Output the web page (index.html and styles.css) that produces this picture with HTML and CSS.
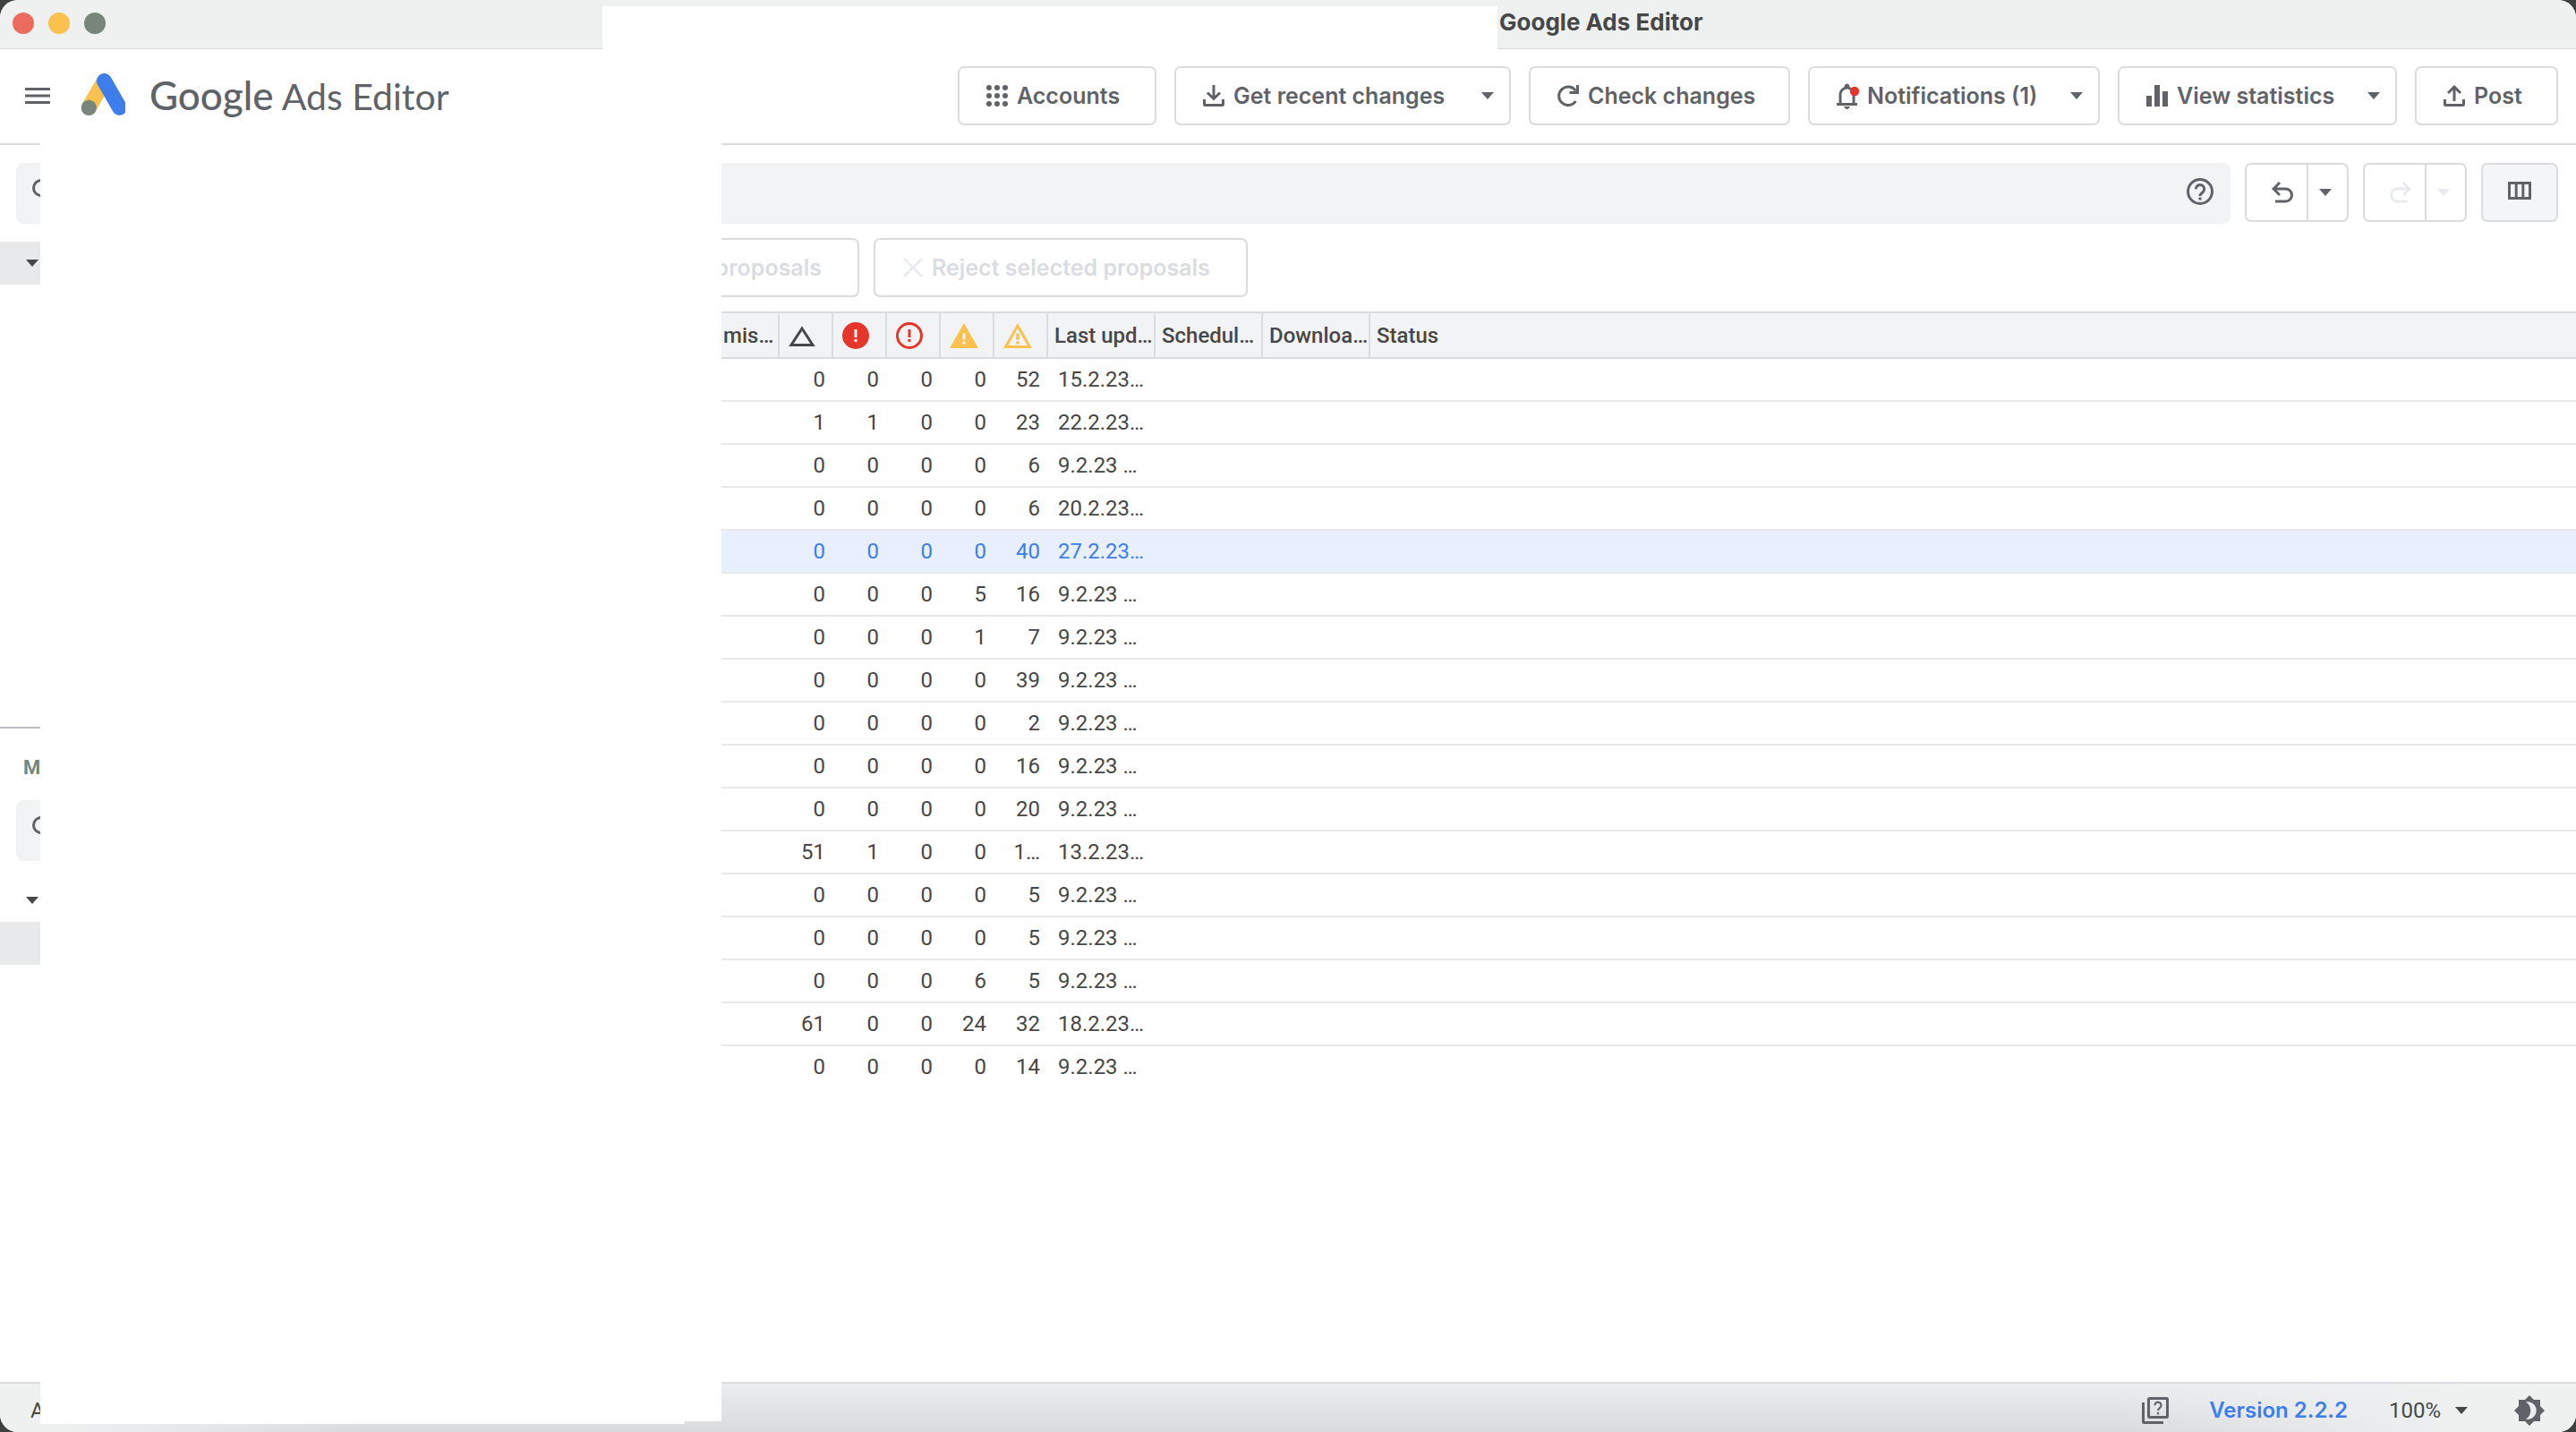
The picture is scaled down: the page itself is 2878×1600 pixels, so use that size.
FILE: index.html
```
<!DOCTYPE html>
<html lang="en">
<head>
<meta charset="utf-8">
<title>Google Ads Editor</title>
<link rel="stylesheet" href="styles.css">
</head>
<body>
<svg class="defs" aria-hidden="true">
  <symbol id="caret" viewBox="0 0 14 8"><path d="M0 0h14L7 8z" fill="currentColor"/></symbol>
  <symbol id="search" viewBox="0 0 28 28"><circle cx="10" cy="10" r="8.500" fill="none" stroke="currentColor" stroke-width="3"/><path d="M16 16l9 9" stroke="currentColor" stroke-width="3"/></symbol>
  <symbol id="undo" viewBox="0 0 24 24"><path d="M9 1L2 8l7 7M3 8h12.500a6.800 6.800 0 0 1 0 14H4" fill="none" stroke="currentColor" stroke-width="3"/></symbol>
</svg>
<div class="window">
  <header class="titlebar">
    <span class="light light-close"></span>
    <span class="light light-min"></span>
    <span class="light light-max"></span>
    <div class="title-blank"></div>
    <h1 class="window-title">Google Ads Editor</h1>
  </header>

  <div class="appbar">
    <button class="menu" aria-label="Main menu"><svg width="28" height="18" viewBox="0 0 28 18"><path d="M0 1.500h28M0 9h28M0 16.500h28" stroke="currentColor" stroke-width="3"/></svg></button>
    <svg class="logo" width="60" height="60" viewBox="0 0 60 60">
      <path d="M36.500 19.500L19.300 49.300" stroke="#fac14e" stroke-width="17"/>
      <path d="M36.500 19.500L53.500 49.300" stroke="#3d7eea" stroke-width="17" stroke-linecap="round"/>
      <circle cx="19.300" cy="49.300" r="8.600" fill="#77857a"/>
    </svg>
    <div class="brand"><span class="brand-google">Google</span> Ads Editor</div>
    <div class="actions">
      <button class="box w-accounts"><svg width="24" height="24" viewBox="0 0 24 24" fill="currentColor"><circle cx="3" cy="3" r="3"/><circle cx="12" cy="3" r="3"/><circle cx="21" cy="3" r="3"/><circle cx="3" cy="12" r="3"/><circle cx="12" cy="12" r="3"/><circle cx="21" cy="12" r="3"/><circle cx="3" cy="21" r="3"/><circle cx="12" cy="21" r="3"/><circle cx="21" cy="21" r="3"/></svg>Accounts</button>
      <div class="box split w-get">
        <button class="part"><svg width="24" height="24" viewBox="0 0 24 24" fill="none" stroke="currentColor" stroke-width="3"><path d="M12 0v15M5 8.500l7 7 7-7M1.500 16v5.500q0 1 1 1h19q1 0 1-1V16"/></svg>Get recent changes</button>
        <button class="drop" aria-label="More download options"><svg class="caret"><use href="#caret"/></svg></button>
      </div>
      <button class="box w-check"><svg width="24" height="24" viewBox="0 0 24 24" fill="none" stroke="currentColor" stroke-width="3"><path d="M20.500 6.500A10.300 10.300 0 1 0 20.500 18"/><path d="M22.500 0v8.500H13.500"/></svg>Check changes</button>
      <div class="box split w-notif">
        <button class="part"><svg class="bell" width="26" height="30" viewBox="0 0 26 30"><path d="M0 24.500h23M4 24V13.500a7.500 7.500 0 0 1 15 0V24" fill="none" stroke="currentColor" stroke-width="3"/><path d="M9 5a2.500 3 0 0 1 5 0zM8.500 27.500h6l-3 2.500z" fill="currentColor" stroke="currentColor"/><circle cx="20" cy="10" r="5.200" fill="#e6352b"/></svg>Notifications (1)</button>
        <button class="drop" aria-label="Notification options"><svg class="caret"><use href="#caret"/></svg></button>
      </div>
      <div class="box split w-stats">
        <button class="part"><svg width="24" height="24" viewBox="0 0 24 24" fill="currentColor"><path d="M0 12h6v12H0zM9 0h6v24H9zM18 7h6v17h-6z"/></svg>View statistics</button>
        <button class="drop" aria-label="Statistics options"><svg class="caret"><use href="#caret"/></svg></button>
      </div>
      <button class="box w-post"><svg width="24" height="24" viewBox="0 0 24 24" fill="none" stroke="currentColor" stroke-width="3"><path d="M12 18V3M5 9l7-7 7 7M1.500 16v5.500q0 1 1 1h19q1 0 1-1V16"/></svg>Post</button>
    </div>
  </div>

  <div class="workspace">
    <aside class="sidebar">
      <div class="accounts-pane">
        <div class="side-search"><svg width="28" height="28"><use href="#search"/></svg></div>
        <div class="side-row side-row-on"><svg class="caret"><use href="#caret"/></svg></div>
      </div>
      <div class="manage-pane">
        <div class="side-label">M</div>
        <div class="side-search"><svg width="28" height="28"><use href="#search"/></svg></div>
        <div class="side-row side-row-tree"><svg class="caret"><use href="#caret"/></svg></div>
        <div class="side-row side-row-on"></div>
      </div>
    </aside>
    <div class="blank"></div>
    <main class="main">
      <div class="toolbar">
        <div class="filter">
          <input type="text" aria-label="Filter accounts">
          <button class="help" aria-label="Help"><svg width="30" height="30" viewBox="0 0 30 30" fill="none" stroke="currentColor" stroke-width="3"><circle cx="15" cy="15" r="13.500"/><path d="M10.300 12.300a4.700 4.700 0 1 1 7.800 3.500c-1.900 1.500-3.100 2-3.100 4.200M15 21.500v3"/></svg></button>
        </div>
        <div class="box history">
          <button class="step" aria-label="Undo"><svg width="24" height="24"><use href="#undo"/></svg></button>
          <button class="step-drop" aria-label="Undo list"><svg class="caret"><use href="#caret"/></svg></button>
        </div>
        <div class="box history history-off">
          <button class="step" aria-label="Redo" disabled><svg class="mirror" width="24" height="24"><use href="#undo"/></svg></button>
          <button class="step-drop" aria-label="Redo list" disabled><svg class="caret"><use href="#caret"/></svg></button>
        </div>
        <button class="box columns" aria-label="Columns"><svg width="26" height="20" viewBox="0 0 26 20" fill="none" stroke="currentColor" stroke-width="3"><path d="M1.500 1.500h23v17h-23zM9.200 1v18M16.800 1v18"/></svg></button>
      </div>
      <div class="proposals">
        <button class="box accept" disabled>proposals</button>
        <button class="box reject" disabled><svg width="22" height="22" viewBox="0 0 22 22"><path d="M1 1l20 20M21 1L1 21" stroke="#e8eaed" stroke-width="2.500"/></svg>Reject selected proposals</button>
      </div>
      <table class="grid">
        <colgroup><col class="c-first"><col class="c-num"><col class="c-num"><col class="c-num"><col class="c-num"><col class="c-num"><col class="c-text"><col class="c-text"><col class="c-text"><col></colgroup>
        <thead><tr>
          <th class="first">mis…</th>
          <th class="ic" aria-label="Changes"><svg width="30" height="30" viewBox="0 0 30 30"><path d="M15 7L27 25.500H3z" fill="none" stroke="#474747" stroke-width="3"/></svg></th>
          <th class="ic" aria-label="Errors"><svg width="30" height="30" viewBox="0 0 30 30"><circle cx="15" cy="15" r="15" fill="#e6352b"/><path d="M15 8v9M15 19v3" stroke="#f1f3f4" stroke-width="3"/></svg></th>
          <th class="ic" aria-label="Policy errors"><svg width="30" height="30" viewBox="0 0 30 30"><circle cx="15" cy="15" r="13.500" fill="none" stroke="#e6352b" stroke-width="3"/><path d="M15 8v9M15 19v3" stroke="#e6352b" stroke-width="3"/></svg></th>
          <th class="ic" aria-label="Warnings"><svg width="32" height="30" viewBox="0 0 32 30"><path d="M16 1l16 28H0z" fill="#fac14e"/><path d="M16 12.500v7M16 21.500v3" stroke="#f1f3f4" stroke-width="3"/></svg></th>
          <th class="ic" aria-label="Policy warnings"><svg width="32" height="30" viewBox="0 0 32 30"><path d="M16 4l13.400 23.500H2.600z" fill="none" stroke="#fac14e" stroke-width="3"/><path d="M16 12.500v7M16 21.500v3" stroke="#fac14e" stroke-width="3.500"/></svg></th>
          <th>Last upd…</th><th>Schedul…</th><th>Downloa…</th><th class="last">Status</th>
        </tr></thead>
        <tbody>
          <tr><td></td><td>0</td><td>0</td><td>0</td><td>0</td><td>52</td><td class="d">15.2.23…</td><td></td><td></td><td></td></tr>
          <tr><td></td><td>1</td><td>1</td><td>0</td><td>0</td><td>23</td><td class="d">22.2.23…</td><td></td><td></td><td></td></tr>
          <tr><td></td><td>0</td><td>0</td><td>0</td><td>0</td><td>6</td><td class="d">9.2.23 …</td><td></td><td></td><td></td></tr>
          <tr><td></td><td>0</td><td>0</td><td>0</td><td>0</td><td>6</td><td class="d">20.2.23…</td><td></td><td></td><td></td></tr>
          <tr class="selected"><td></td><td>0</td><td>0</td><td>0</td><td>0</td><td>40</td><td class="d">27.2.23…</td><td></td><td></td><td></td></tr>
          <tr><td></td><td>0</td><td>0</td><td>0</td><td>5</td><td>16</td><td class="d">9.2.23 …</td><td></td><td></td><td></td></tr>
          <tr><td></td><td>0</td><td>0</td><td>0</td><td>1</td><td>7</td><td class="d">9.2.23 …</td><td></td><td></td><td></td></tr>
          <tr><td></td><td>0</td><td>0</td><td>0</td><td>0</td><td>39</td><td class="d">9.2.23 …</td><td></td><td></td><td></td></tr>
          <tr><td></td><td>0</td><td>0</td><td>0</td><td>0</td><td>2</td><td class="d">9.2.23 …</td><td></td><td></td><td></td></tr>
          <tr><td></td><td>0</td><td>0</td><td>0</td><td>0</td><td>16</td><td class="d">9.2.23 …</td><td></td><td></td><td></td></tr>
          <tr><td></td><td>0</td><td>0</td><td>0</td><td>0</td><td>20</td><td class="d">9.2.23 …</td><td></td><td></td><td></td></tr>
          <tr><td></td><td>51</td><td>1</td><td>0</td><td>0</td><td>1…</td><td class="d">13.2.23…</td><td></td><td></td><td></td></tr>
          <tr><td></td><td>0</td><td>0</td><td>0</td><td>0</td><td>5</td><td class="d">9.2.23 …</td><td></td><td></td><td></td></tr>
          <tr><td></td><td>0</td><td>0</td><td>0</td><td>0</td><td>5</td><td class="d">9.2.23 …</td><td></td><td></td><td></td></tr>
          <tr><td></td><td>0</td><td>0</td><td>0</td><td>6</td><td>5</td><td class="d">9.2.23 …</td><td></td><td></td><td></td></tr>
          <tr><td></td><td>61</td><td>0</td><td>0</td><td>24</td><td>32</td><td class="d">18.2.23…</td><td></td><td></td><td></td></tr>
          <tr><td></td><td>0</td><td>0</td><td>0</td><td>0</td><td>14</td><td class="d">9.2.23 …</td><td></td><td></td><td></td></tr>
        </tbody>
      </table>
    </main>
  </div>

  <footer class="statusbar">
    <span class="status-text">A</span>
    <div class="status-blank"></div>
    <div class="status-blank status-blank-end"></div>
    <button class="status-btn" aria-label="Help topics"><svg width="30" height="30" viewBox="0 0 30 30" fill="none" stroke="currentColor" stroke-width="3"><rect x="7.500" y="1.500" width="21" height="21" rx="1"/><path d="M1.500 6v21.500q0 1 1 1H24"/><path d="M14.500 9.300a3.500 3.500 0 1 1 5.500 2.700c-1.300 1-2 1.500-2 3.200M18 17v2.500" stroke-width="2.200"/></svg></button>
    <a class="version" href="#">Version 2.2.2</a>
    <button class="status-btn zoom">100%<svg class="caret"><use href="#caret"/></svg></button>
    <button class="status-btn" aria-label="Theme"><svg width="34" height="34" viewBox="0 0 34 34"><path d="M17 0l5 5h7v7l5 5-5 5v7h-7l-5 5-5-5H5v-7l-5-5 5-5V5h7z" fill="#5f6368"/><path d="M13 7.500a9.700 9.700 0 1 1 0 19c7-3.500 7-15.500 0-19z" fill="#eceeef"/></svg></button>
  </footer>
</div>
</body>
</html>
```
FILE: styles.css
```
* { box-sizing: border-box; }

:root {
  --line: #dadce0;
  --ink: #5f6368;
  --text: #474747;
  --fill: #f1f3f4;
  --blue: #3d7eea;
}

body {
  margin: 0;
  background: #3f3f3f;
  color: var(--text);
  font: 24px/28px Roboto, sans-serif;
}

button, input {
  margin: 0;
  padding: 0;
  border: 0;
  background: none;
  color: inherit;
  font: inherit;
}

svg { flex: none; display: block; }
.defs { position: absolute; width: 0; height: 0; }
.caret { width: 14px; height: 8px; }
.mirror { transform: scaleX(-1); }

.window {
  display: flex;
  flex-direction: column;
  min-height: 100vh;
  background: #fff;
  border-radius: 20px;
  overflow: hidden;
}

/* Title bar */
.titlebar {
  position: relative;
  display: flex;
  align-items: center;
  gap: 16px;
  height: 55px;
  padding: 0 0 3px 14px;
  background: #eff1f1;
  border-bottom: 1px solid var(--line);
}
.light { width: 24px; height: 24px; border-radius: 50%; }
.light-close { background: #ed6a5f; }
.light-min { background: #fac14e; }
.light-max { background: #77857a; }
.title-blank {
  position: absolute;
  left: 673px;
  top: 7px;
  width: 1000px;
  height: 48px;
  background: #fff;
}
.window-title {
  position: absolute;
  left: 1675px;
  top: 9px;
  margin: 0;
  font: 700 26px/32px Inter, sans-serif;
}

/* App bar */
.appbar {
  display: flex;
  align-items: center;
  height: 105px;
  padding: 0 20px 2px 28px;
  color: var(--ink);
}
.menu { width: 52px; height: 18px; }
.logo { margin-top: -12px; }
.brand {
  margin-left: 27px;
  font: 400 41px/56px Lato, sans-serif;
  white-space: nowrap;
}
.brand-google { font-size: 44px; font-weight: 500; }
.actions { display: flex; gap: 20px; margin-left: auto; }

.box {
  display: flex;
  align-items: center;
  height: 66px;
  border: 2px solid var(--line);
  border-radius: 7px;
  background: #fff;
  font: 600 25px/32px Inter, sans-serif;
  white-space: nowrap;
}
button.box, .part { gap: 10px; padding-left: 30px; }
.split { justify-content: space-between; }
.part { display: flex; align-items: center; height: 100%; }
.drop { display: flex; align-items: center; height: 100%; padding: 0 17px; }
.bell { margin-right: -2px; }
.w-accounts { width: 222px; }
.w-get { width: 376px; }
.w-check { width: 292px; }
.w-notif { width: 326px; }
.w-stats { width: 312px; }
.w-post { width: 160px; }

/* Workspace */
.workspace {
  flex: 1;
  display: grid;
  grid-template-columns: 45px 761px minmax(0, 1fr);
}
.sidebar { display: flex; flex-direction: column; overflow: hidden; border-top: 2px solid var(--line); }
.accounts-pane { height: 650px; padding-top: 20px; }
.manage-pane { border-top: 2px solid #bdbfc4; padding-top: 30px; }
.side-search {
  height: 68px;
  margin: 0 -20px 20px 18px;
  padding: 18px;
  border-radius: 8px;
  background: var(--fill);
  color: var(--ink);
}
.side-label { height: 50px; padding-left: 26px; color: #77857a; font-size: 22px; font-weight: 700; }
.side-row { display: flex; align-items: center; height: 48px; padding-left: 29px; }
.side-row-on { background: #e8e9eb; }

/* Main pane */
.main { border-top: 2px solid var(--line); padding-top: 20px; }
.toolbar { display: flex; align-items: flex-start; gap: 16px; padding-right: 20px; color: var(--ink); }
.filter {
  flex: 1;
  display: flex;
  align-items: center;
  height: 68px;
  padding: 0 19px 4px 0;
  border-radius: 0 8px 8px 0;
  background: var(--fill);
}
.filter input { flex: 1; height: 100%; }
.history { width: 116px; }
.history-off { color: #e8eaed; }
.step { display: flex; align-items: center; width: 69px; height: 100%; padding-left: 28px; border-right: 2px solid var(--line); }
.step-drop { display: flex; align-items: center; flex: 1; height: 100%; padding-left: 12px; }
button.columns { width: 86px; padding: 0 0 4px; justify-content: center; background: #f4f5f6; }

.proposals { display: flex; gap: 16px; margin: 16px 0; }
.proposals .box { color: var(--line); }
button.accept { width: 154px; padding: 0 40px 0 0; justify-content: flex-end; overflow: hidden; border-left: 0; border-radius: 0 7px 7px 0; }
button.reject { width: 418px; padding-left: 31px; }

.grid { width: 100%; table-layout: fixed; border-collapse: separate; border-spacing: 0; }
.c-first { width: 65px; }
.c-num { width: 60px; }
.c-text { width: 120px; }
.grid th {
  height: 53px;
  padding: 0 0 0 7px;
  border: solid var(--line);
  border-width: 2px 2px 2px 0;
  background: var(--fill);
  font-weight: 500;
  text-align: left;
  white-space: nowrap;
}
.grid th.first { padding-left: 2px; }
.grid th.ic { padding-left: 10px; }
.grid th.last { border-right: 0; }
.grid td {
  height: 48px;
  padding: 0 9px 0 0;
  border-bottom: 2px solid #e8e9ea;
  text-align: right;
  white-space: nowrap;
}
.grid td.d { padding: 0 0 0 11px; text-align: left; }
.grid tr:last-child td { border-bottom-color: transparent; }
.grid .selected td { background: #e8effe; color: var(--blue); }

/* Status bar */
.statusbar {
  position: relative;
  display: flex;
  align-items: center;
  height: 56px;
  padding: 5px 35px 0 34px;
  border-top: 2px solid var(--line);
  background:
    linear-gradient(90deg, #eff1f1 2%, transparent 14%, transparent 82%, #eff1f1 96%),
    linear-gradient(#ecedef, #d9dadd);
}
.status-text { margin-right: auto; }
.status-blank {
  position: absolute;
  left: 45px;
  top: -2px;
  width: 720px;
  height: 47px;
  background: #fff;
}
.status-blank-end { left: 765px; width: 41px; height: 44px; }
.status-btn { display: flex; align-items: center; color: var(--ink); }
.version {
  margin: 0 46px 0 45px;
  color: var(--blue);
  font: 600 24px/28px Inter, sans-serif;
  text-decoration: none;
}
.zoom { gap: 16px; margin-right: 52px; color: var(--text); }
```
